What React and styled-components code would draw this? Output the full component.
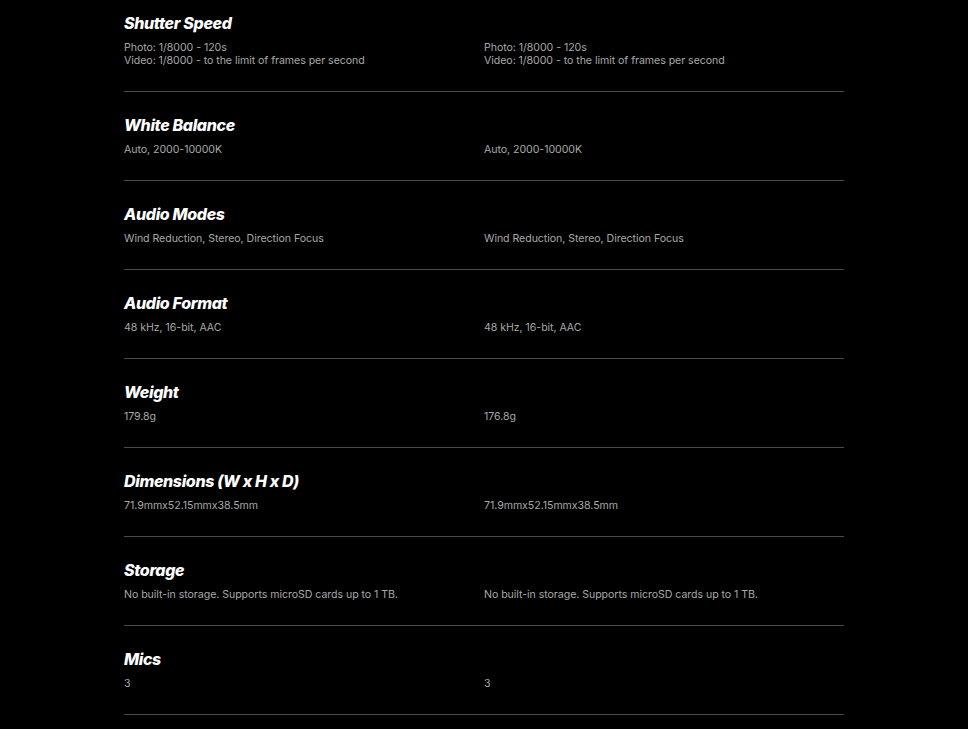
import React from "react";
import styled, { createGlobalStyle } from "styled-components";

const GlobalStyle = createGlobalStyle`
  html, body {
    margin: 0;
    padding: 0;
    background: #000;
  }
  body {
    font-family: "Inter", "Liberation Sans", sans-serif;
  }
`;

const specs = [
  {
    title: "Shutter Speed",
    left: ["Photo: 1/8000 - 120s", "Video: 1/8000 - to the limit of frames per second"],
    right: ["Photo: 1/8000 - 120s", "Video: 1/8000 - to the limit of frames per second"],
  },
  { title: "White Balance", left: ["Auto, 2000-10000K"], right: ["Auto, 2000-10000K"] },
  {
    title: "Audio Modes",
    left: ["Wind Reduction, Stereo, Direction Focus"],
    right: ["Wind Reduction, Stereo, Direction Focus"],
  },
  { title: "Audio Format", left: ["48 kHz, 16-bit, AAC"], right: ["48 kHz, 16-bit, AAC"] },
  { title: "Weight", left: ["179.8g"], right: ["176.8g"] },
  {
    title: "Dimensions (W x H x D)",
    left: ["71.9mmx52.15mmx38.5mm"],
    right: ["71.9mmx52.15mmx38.5mm"],
  },
  {
    title: "Storage",
    left: ["No built-in storage. Supports microSD cards up to 1 TB."],
    right: ["No built-in storage. Supports microSD cards up to 1 TB."],
  },
  { title: "Mics", left: ["3"], right: ["3"] },
];

export default function App() {
  return (
    <>
      <GlobalStyle />
      <Page>
        <Table>
          {specs.map((s, i) => (
            <Row key={s.title} $first={i === 0}>
              <Title>{s.title}</Title>
              <Values>
                <Cell>
                  {s.left.map((line) => (
                    <div key={line}>{line}</div>
                  ))}
                </Cell>
                <Cell>
                  {s.right.map((line) => (
                    <div key={line}>{line}</div>
                  ))}
                </Cell>
              </Values>
            </Row>
          ))}
        </Table>
      </Page>
    </>
  );
}

const Page = styled.div`
  background: #000;
  min-height: 729px;
  display: flex;
  justify-content: center;
`;

const Table = styled.div`
  width: 720px;
`;

const Row = styled.div`
  padding: ${({ $first }) => ($first ? "13px" : "23px")} 0 24px;
  border-bottom: 1px solid #4b4b4b;
  display: flex;
  flex-direction: column;
  gap: 8px;
`;

const Title = styled.h3`
  margin: 0;
  color: #fff;
  font-family: "Inter", "Liberation Sans", sans-serif;
  font-size: 16px;
  line-height: 20px;
  font-weight: 800;
  font-style: italic;
  letter-spacing: -0.35px;
`;

const Values = styled.div`
  display: grid;
  grid-template-columns: 1fr 1fr;
`;

const Cell = styled.div`
  color: #a8a8a8;
  font-family: "Inter", "Liberation Sans", sans-serif;
  font-size: 10.6px;
  line-height: 13px;
  letter-spacing: -0.05px;
`;
